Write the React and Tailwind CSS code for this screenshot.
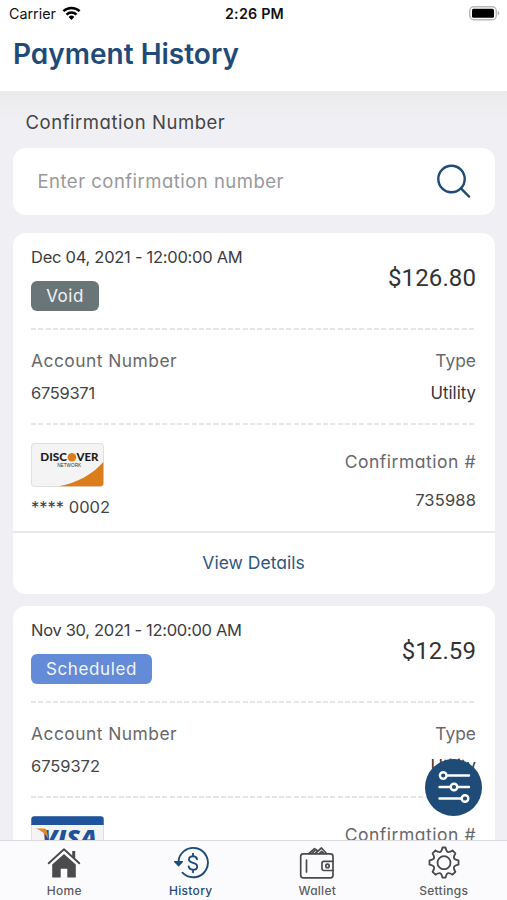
/**
 * PaymentHistoryPage
 * Mobile payment history — search by confirmation number, list of payments, tab bar.
 */
import React, { useState } from 'react';

const payments = [
  {
    id: 1,
    date: 'Dec 04, 2021 - 12:00:00 AM',
    dateClass: 'tracking-[-0.27px]',
    status: 'Void',
    statusClass: 'w-[68px] bg-[#6a7578] tracking-[0.5px]',
    amount: '$126.80',
    account: '6759371',
    accountClass: 'tracking-[-0.3px]',
    type: 'Utility',
    card: 'discover',
    last4: '0002',
    confirmation: '735988',
  },
  {
    id: 2,
    date: 'Nov 30, 2021 - 12:00:00 AM',
    dateClass: 'tracking-[-0.3px]',
    status: 'Scheduled',
    statusClass: 'w-[121px] bg-[#648bd8] tracking-[0.6px]',
    amount: '$12.59',
    account: '6759372',
    accountClass: 'tracking-[-0.05px]',
    type: 'Utility',
    card: 'visa',
  },
];

function WifiIcon() {
  return (
    <svg className="h-[15px] w-[19px]" viewBox="0 0 19 15" fill="none" stroke="#000" strokeWidth="2.5">
      <path d="M1.4 5.2a11.6 11.6 0 0 1 16.2 0" />
      <path d="M4.5 8.6a7.2 7.2 0 0 1 10 0" />
      <path d="M6.6 10.9a4.2 4.2 0 0 1 5.8 0L9.5 14z" fill="#000" stroke="none" />
    </svg>
  );
}

function BatteryIcon() {
  return (
    <svg className="h-[15px] w-[31px]" viewBox="0 0 31 15">
      <rect x="0.75" y="0.75" width="26.5" height="13" rx="4" fill="#fff" stroke="#b9b9b9" strokeWidth="1.5" />
      <rect x="3" y="2.8" width="22" height="9" rx="1.6" fill="#000" />
      <path d="M28.7 4.8c2.2.8 2.2 4.1 0 4.9z" fill="#b9b9b9" />
    </svg>
  );
}

function SearchIcon() {
  return (
    <svg className="mb-[2px] h-[36px] w-[36px]" viewBox="0 0 36 36" fill="none" stroke="#1f4b78" strokeWidth="2.4" strokeLinecap="round">
      <circle cx="15.5" cy="16" r="13.2" />
      <path d="M24.9 25.4l8.2 8.2" />
    </svg>
  );
}

function DiscoverCard() {
  return (
    <svg className="block h-[44px] w-[73px]" viewBox="0 0 73 44">
      <rect x="0.5" y="0.5" width="72" height="43" rx="3" fill="#f4f4f4" stroke="#dfdfdf" />
      <path d="M28 43.3C46 40 62 31 72.3 19v21.5a3 3 0 0 1-3 2.8z" fill="#db7d18" />
      <g fontFamily="Lato, sans-serif" fontWeight="900" fontSize="11" fill="#1c1c1c">
        <text x="9.3" y="18.2" textLength="26.6" lengthAdjust="spacingAndGlyphs">DISC</text>
        <text x="45.4" y="18.2" textLength="22" lengthAdjust="spacingAndGlyphs">VER</text>
      </g>
      <circle cx="40.9" cy="14.2" r="4.3" fill="#db7d18" />
      <text x="26.2" y="24.4" fontFamily="Liberation Sans, sans-serif" fontSize="4.5" fill="#333" textLength="24" lengthAdjust="spacingAndGlyphs">NETWORK</text>
    </svg>
  );
}

function VisaCard() {
  return (
    <svg className="block h-[44px] w-[73px]" viewBox="0 0 73 44">
      <rect x="0.5" y="0.5" width="72" height="43" rx="3" fill="#f4f4f4" stroke="#dfdfdf" />
      <path d="M0.3 9V3a3 3 0 0 1 3-2.8h66.4a3 3 0 0 1 3 2.8v6z" fill="#1f549c" />
      <text x="11" y="29.5" fontFamily="Open Sans, sans-serif" fontWeight="800" fontStyle="italic" fontSize="23" fill="#1f549c" textLength="55" lengthAdjust="spacingAndGlyphs">VISA</text>
      <path d="M4.5 12.5h8.6c1.600 0 2.300.800 2.600 2l1.800 9C15 18 10.800 14.500 4.500 12.500z" fill="#e38a1e" />
    </svg>
  );
}

function HomeIcon() {
  return (
    <svg className="h-[34px] w-[36px]" viewBox="0 0 36 34">
      <path d="M26.2 5h3v8l-3-2.7z" fill="#4b4b4d" />
      <path d="M2.700 17.300L18 3.300l15.300 14" fill="none" stroke="#4b4b4d" strokeWidth="1.900" strokeLinecap="round" strokeLinejoin="round" />
      <path d="M6.200 18.600L18 7.900l11.800 10.700V31.500h-8.500v-8.800h-6.600v8.800H6.200z" fill="#4b4b4d" />
    </svg>
  );
}

function HistoryIcon() {
  return (
    <svg className="h-[34px] w-[36px]" viewBox="0 0 36 34" fill="none" stroke="#1f4b78" strokeWidth="1.9" strokeLinecap="round" strokeLinejoin="round">
      <path d="M5.500 17.500a14.700 14.700 0 1 1 4 9.200" />
      <path d="M1.500 15.700h8L5.600 19.800z" fill="#1f4b78" strokeWidth="1.200" />
      <path d="M24 13.200c-.4-2-1.900-3-4-3-2.400 0-4 1.200-4 3.200 0 4.600 8.200 2.300 8.200 7 0 2.100-1.700 3.300-4.200 3.300-2.300 0-4-1.100-4.300-3.300M20 7.700v2.500M20 23.700v2.500" />
    </svg>
  );
}

function WalletIcon() {
  return (
    <svg className="h-[34px] w-[36px]" viewBox="0 0 36 34" fill="none" stroke="#4b4b4d" strokeWidth="1.7" strokeLinecap="round" strokeLinejoin="round">
      <rect x="1.700" y="7.800" width="32.300" height="24" rx="2.600" />
      <path d="M10 7.500L15.500 2.600l2.300 1.700M12.800 7.500l3.200-3M16.200 7.500L22.500 2l5 5.500M20.500 7.500l2.300-2 2 2" />
      <path d="M7.500 14v12" />
      <path d="M34 15.300H24.800a1.800 1.800 0 0 0-1.800 1.800v5.600a1.800 1.800 0 0 0 1.800 1.800H34" />
      <circle cx="28.500" cy="19.900" r="1.700" />
    </svg>
  );
}

function SettingsIcon() {
  return (
    <svg className="h-[34px] w-[36px]" viewBox="0 0 36 34" fill="none" stroke="#4b4b4d" strokeWidth="1.8" strokeLinejoin="round">
      <path d="M16.500 1.500h3c.7 3.300 1.100 3.900 2.200 4.400 1.300.5 2.100.4 4.800-1.400l2.900 2.900c-1.700 2.700-1.900 3.500-1.400 4.800.5 1.200 1.100 1.600 4.500 2.300v4.200c-3.400.7-4 1.100-4.500 2.300-.5 1.300-.3 2.100 1.400 4.800l-2.900 2.900c-2.700-1.700-3.500-1.900-4.800-1.400-1.100.5-1.500 1.100-2.200 4.400h-3c-.7-3.300-1.100-3.900-2.200-4.400-1.300-.5-2.100-.3-4.800 1.400l-2.900-2.900c1.700-2.700 1.900-3.500 1.400-4.800-.5-1.200-1.100-1.600-4.500-2.300v-4.200c3.400-.7 4-1.100 4.500-2.300.5-1.300.3-2.100-1.400-4.800l2.900-2.900c2.700 1.800 3.500 1.900 4.800 1.400 1.100-.5 1.500-1.100 2.200-4.400z" />
      <circle cx="18" cy="16.700" r="6.500" />
    </svg>
  );
}

function FilterButton() {
  return (
    <button className="absolute right-[25px] bottom-[24.5px] flex h-[57px] w-[57px] items-center justify-center rounded-full bg-[#1f4b78]">
      <svg className="h-[34px] w-[34px]" viewBox="0 0 34 34" fill="none" stroke="#fff" strokeWidth="2.4" strokeLinecap="round">
        <path d="M10 5.500h22M2.500 17h10M21 17h11M2.500 28.500h22" />
        <circle cx="6.200" cy="5.500" r="3.300" />
        <circle cx="17" cy="17" r="3.300" />
        <circle cx="28" cy="28.500" r="3.300" />
      </svg>
    </button>
  );
}

function DashedDivider() {
  return <div className="h-[2px] bg-[repeating-linear-gradient(90deg,#e6e6e6_0_5px,#fff_5px_7.3px)]" />;
}

function PaymentCard({ payment }) {
  return (
    <section className="h-[361px] shrink-0 rounded-[13px] bg-white">
      <div className="px-[18.5px]">
        <div className="flex h-[95px] justify-between pt-[13px]">
          <div>
            <p className={`text-[16.5px] leading-[23px] whitespace-nowrap text-[#3c3c3e] ${payment.dateClass}`}>{payment.date}</p>
            <span className={`mt-[12px] flex h-[30px] items-center justify-center rounded-[6px] pt-[2px] text-[17px] text-[#f1f4f8] ${payment.statusClass}`}>
              {payment.status}
            </span>
          </div>
          <p className="pt-[18px] font-[Roboto,sans-serif] text-[24px] leading-[28px] tracking-[0.1px] text-[#333]">{payment.amount}</p>
        </div>
        <DashedDivider />

        <div className="flex h-[93px] justify-between pt-[19px] text-[16.5px] leading-[24px]">
          <div>
            <p className="text-[17.4px] tracking-[0.48px] text-[#68686a]">Account Number</p>
            <p className={`mt-[8px] text-[#454547] ${payment.accountClass}`}>{payment.account}</p>
          </div>
          <div className="text-right">
            <p className="text-[17.4px] text-[#68686a]">Type</p>
            <p className="mt-[8px] text-[16.8px] text-[#363638]">{payment.type}</p>
          </div>
        </div>
        <DashedDivider />

        <div className="flex h-[106px] justify-between pt-[18px] text-[16.5px] leading-[24px]">
          <div>
            {payment.card === 'discover' ? <DiscoverCard /> : <VisaCard />}
            {payment.last4 && <p className="mt-[8px] text-[#454547]">**** {payment.last4}</p>}
          </div>
          <div className="pt-[7px] text-right">
            <p className="text-[17.5px] tracking-[0.52px] text-[#68686a]">Confirmation #</p>
            <p className="mt-[14px] tracking-[0.15px] text-[#454547]">{payment.confirmation}</p>
          </div>
        </div>
      </div>
      {payment.confirmation && (
        <button className="flex h-[63px] w-full items-center justify-center border-t-2 border-[#e9e9eb] text-[17.5px] text-[#2f5680]">
          View Details
        </button>
      )}
    </section>
  );
}

const tabs = [
  { key: 'home', label: 'Home', icon: HomeIcon, labelClass: 'tracking-[0.3px]' },
  { key: 'history', label: 'History', icon: HistoryIcon, labelClass: 'tracking-[0.3px]' },
  { key: 'wallet', label: 'Wallet', icon: WalletIcon, labelClass: 'tracking-[0.25px]' },
  { key: 'settings', label: 'Settings', icon: SettingsIcon, labelClass: 'tracking-[0.3px]' },
];

export default function App() {
  const [search, setSearch] = useState('');
  const [activeTab, setActiveTab] = useState('history');

  return (
    <div className="flex h-[900px] w-[507px] flex-col overflow-hidden bg-[#f0f0f4] font-[Inter,sans-serif] [font-feature-settings:'cv11']">
      <header className="h-[91px] shrink-0 bg-white">
        <div className="grid h-[27px] grid-cols-3 items-center pr-[7px] pl-[9px] text-[14.3px] text-[#111] [font-feature-settings:normal]">
          <div className="flex items-center gap-[6px]">
            <span>Carrier</span>
            <WifiIcon />
          </div>
          <span className="text-center font-semibold tracking-[0.2px]">2:26 PM</span>
          <div className="flex justify-end">
            <BatteryIcon />
          </div>
        </div>
        <h1 className="pl-[13px] text-[28px] leading-[54px] font-semibold text-[#1f4b78]">Payment History</h1>
      </header>

      <main className="relative flex min-h-0 flex-1 flex-col overflow-hidden bg-[#f0f0f4] bg-[linear-gradient(180deg,#ebebed,#f0f0f4_28px)] px-[12.5px]">
        <label className="pt-[18px] pl-[13px] text-[18.5px] leading-[27px] tracking-[0.54px] text-[#444446]">Confirmation Number</label>
        <div className="mt-[12px] flex h-[67px] shrink-0 items-center justify-between rounded-[13px] bg-white pr-[23px] pl-[25px]">
          <input
            value={search}
            onChange={(e) => setSearch(e.target.value)}
            placeholder="Enter confirmation number"
            className="w-[300px] text-[18.5px] tracking-[0.48px] text-[#444446] outline-none placeholder:text-[#98989a]"
          />
          <SearchIcon />
        </div>
        <div className="mt-[18px] flex flex-col gap-[12px]">
          {payments.map((payment) => (
            <PaymentCard key={payment.id} payment={payment} />
          ))}
        </div>
        <FilterButton />
      </main>

      <nav className="grid h-[60px] shrink-0 grid-cols-4 border-t border-[#dcdcde] bg-[#fbfbfd] pl-[1px]">
        {tabs.map(({ key, label, icon: Icon, labelClass }) => (
          <button
            key={key}
            onClick={() => setActiveTab(key)}
            className={`flex flex-col items-center pt-[5px] ${activeTab === key ? 'text-[#1f4b78]' : 'text-[#5d5d5f]'}`}
          >
            <Icon />
            <span className={`mt-[3px] text-[12px] leading-[16px] font-medium ${labelClass}`}>{label}</span>
          </button>
        ))}
      </nav>
    </div>
  );
}
